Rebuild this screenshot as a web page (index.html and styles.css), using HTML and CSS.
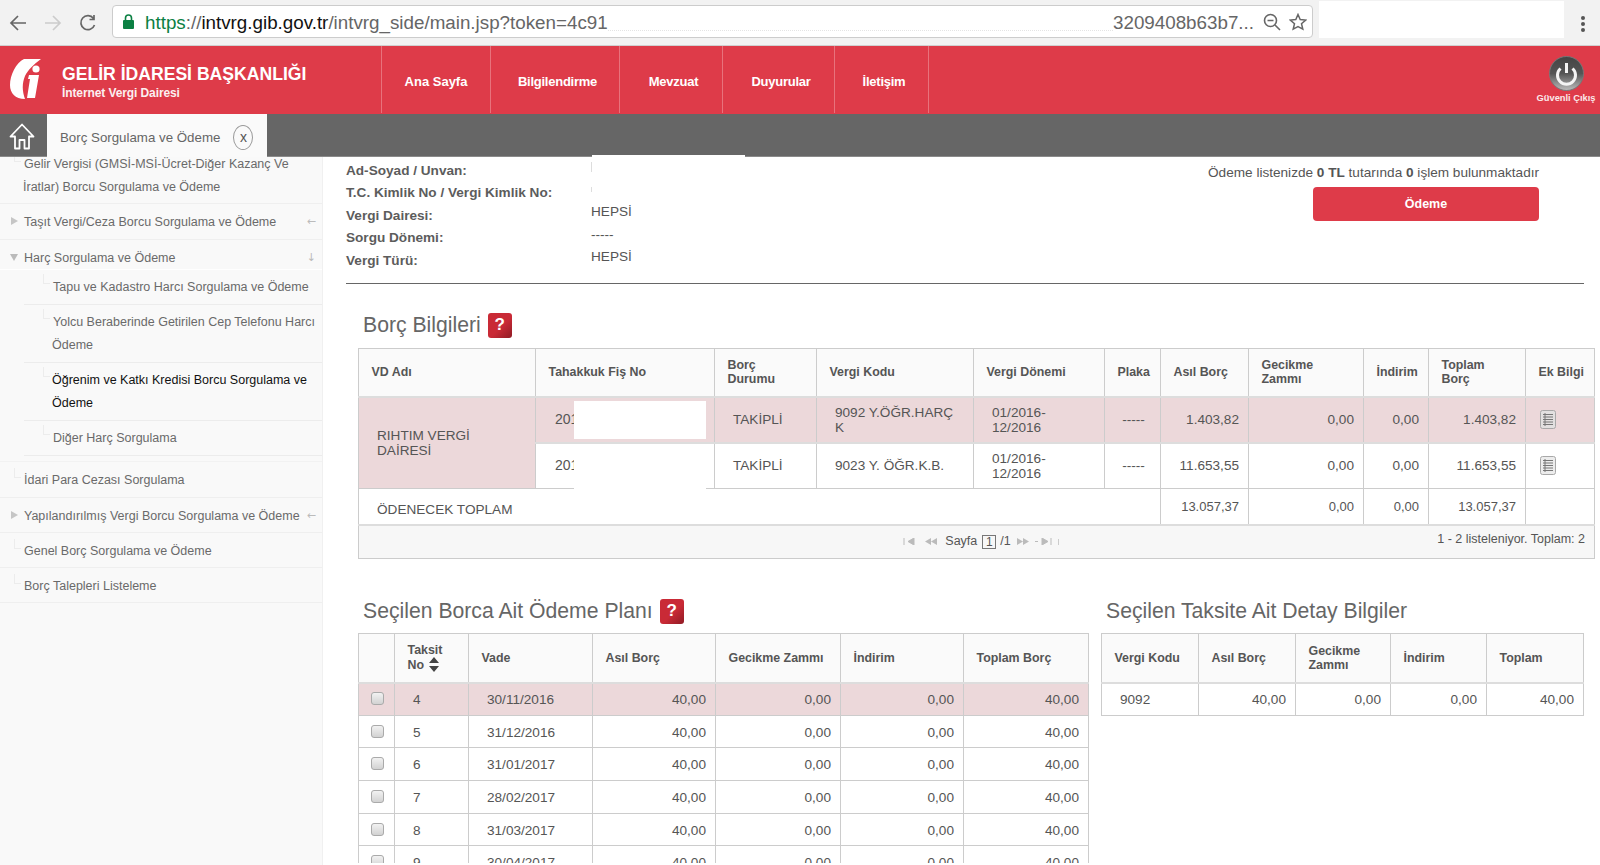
FILE: index.html
```html
<!DOCTYPE html>
<html lang="tr">
<head>
<meta charset="utf-8">
<title>Borç Sorgulama ve Ödeme</title>
<link rel="stylesheet" href="styles.css">
</head>
<body>
<div class="browser">
  <svg class="nav-btn" width="18" height="18" viewBox="0 0 18 18"><path d="M17 9H2M9 2L2 9l7 7" fill="none" stroke="#666" stroke-width="1.7"/></svg>
  <svg class="nav-btn" width="18" height="18" viewBox="0 0 18 18"><path d="M1 9h15M9 2l7 7-7 7" fill="none" stroke="#ccc" stroke-width="1.7"/></svg>
  <svg class="nav-btn" width="18" height="18" viewBox="0 0 18 18"><path d="M15.500 11a7 7 0 1 1-1-6.500M15 1v4.500h-4.500" fill="none" stroke="#666" stroke-width="1.7"/></svg>
  <div class="omnibox">
    <svg class="lock" width="11" height="15" viewBox="0 0 11 15"><rect y="6" width="11" height="9" rx="1" fill="#0b8043"/><path d="M2.500 6V4a3 3 0 0 1 6 0v2" fill="none" stroke="#0b8043" stroke-width="1.600"/></svg>
    <span class="url"><span class="url-https">https</span>://<span class="url-host">intvrg.gib.gov.tr</span>/intvrg_side/main.jsp?token=4c91</span>
    <span class="url-mask"></span>
    <span class="url url-end">3209408b63b7...</span>
    <svg class="omni-icon" width="18" height="18" viewBox="0 0 18 18"><circle cx="7.500" cy="7.500" r="6" fill="none" stroke="#666" stroke-width="1.600"/><path d="M12 12l5 5M4.500 7.500h6" stroke="#666" stroke-width="1.600"/></svg>
    <svg class="omni-icon" width="18" height="18" viewBox="0 0 18 18"><path d="M9 1.500l2.200 5.100 5.500.5-4.200 3.600 1.300 5.400L9 13.700l-4.800 2.400 1.300-5.400L1.300 7.100l5.500-.5z" fill="none" stroke="#666" stroke-width="1.500"/></svg>
  </div>
  <div class="ext-mask"></div>
  <svg class="kebab" width="4" height="18" viewBox="0 0 4 18"><circle cx="2" cy="3" r="2" fill="#555"/><circle cx="2" cy="9" r="2" fill="#555"/><circle cx="2" cy="15" r="2" fill="#555"/></svg>
</div>

<header class="site-header">
  <div class="brand">
    <svg class="logo" width="32" height="41" viewBox="0 0 32 41"><path d="M31 0H14C6 4 0 16 0 26c0 8 5 14 15 14-3-8-3-16 0-23C18 11 23 6 31 0z" fill="#fff"/><path d="M19 16h10l-4 23H17l3-19h-2z" fill="#fff"/><circle cx="26" cy="10" r="3.600" fill="#fff"/></svg>
    <div class="brand-text">
      <div class="brand-title">GELİR İDARESİ BAŞKANLIĞI</div>
      <div class="brand-sub">İnternet Vergi Dairesi</div>
    </div>
  </div>
  <nav class="main-nav">
    <a class="nav-item">Ana Sayfa</a>
    <a class="nav-item">Bilgilendirme</a>
    <a class="nav-item">Mevzuat</a>
    <a class="nav-item">Duyurular</a>
    <a class="nav-item">İletişim</a>
  </nav>
  <div class="logout">
    <svg class="power" width="35" height="35" viewBox="0 0 35 35"><defs><linearGradient id="pw" x1="0" y1="0" x2="0" y2="1"><stop offset="0" stop-color="#444"/><stop offset=".5" stop-color="#555"/><stop offset="1" stop-color="#bdbdbd"/></linearGradient></defs><circle cx="17.500" cy="17.500" r="17" fill="url(#pw)" stroke="#777" stroke-width="1"/><path d="M11.500 12.500a9 9 0 1 0 12 0" fill="none" stroke="#f4f4f4" stroke-width="3"/><path d="M17.500 7v10" stroke="#f4f4f4" stroke-width="3"/></svg>
    <span class="logout-label">Güvenli Çıkış</span>
  </div>
</header>

<div class="tab-bar">
  <div class="home">
    <svg width="26" height="27" viewBox="0 0 26 27"><path d="M1.500 13.500L13 1.500l11.500 12H20V25.500h-4.500V17h-5v8.500H6V13.500z" fill="none" stroke="#fff" stroke-width="1.800" stroke-linejoin="round"/></svg>
  </div>
  <div class="tab">
    <span>Borç Sorgulama ve Ödeme</span>
    <span class="tab-close">x</span>
  </div>
</div>

<div class="layout">
  <aside class="sidebar">
    <ul class="tree">
      <li class="leaf leaf-first">Gelir Vergisi (GMSİ-MSİ-Ücret-Diğer Kazanç Ve<br><span class="wrap-back">İratlar) Borcu Sorgulama ve Ödeme</span></li>
      <li class="branch closed">Taşıt Vergi/Ceza Borcu Sorgulama ve Ödeme<span class="arrow">←</span></li>
      <li class="branch open">Harç Sorgulama ve Ödeme<span class="arrow">↓</span></li>
      <li class="sub">
        <ul class="subtree">
          <li class="sub-leaf">Tapu ve Kadastro Harcı Sorgulama ve Ödeme</li>
          <li class="sub-leaf">Yolcu Beraberinde Getirilen Cep Telefonu Harcı<br><span class="wrap-back">Ödeme</span></li>
          <li class="sub-leaf active">Öğrenim ve Katkı Kredisi Borcu Sorgulama ve<br>Ödeme</li>
          <li class="sub-leaf">Diğer Harç Sorgulama</li>
        </ul>
      </li>
      <li class="leaf leaf-gap">İdari Para Cezası Sorgulama</li>
      <li class="branch closed tight">Yapılandırılmış Vergi Borcu Sorgulama ve Ödeme<span class="arrow">←</span></li>
      <li class="leaf tight">Genel Borç Sorgulama ve Ödeme</li>
      <li class="leaf tight">Borç Talepleri Listeleme</li>
    </ul>
  </aside>

  <main class="content">
    <section class="summary">
      <div class="labels">
        <div>Ad-Soyad / Unvan:</div>
        <div>T.C. Kimlik No / Vergi Kimlik No:</div>
        <div>Vergi Dairesi:</div>
        <div>Sorgu Dönemi:</div>
        <div>Vergi Türü:</div>
      </div>
      <div class="values">
        <span class="value-mask"></span>
        <div><i class="tick"></i></div>
        <div><i class="tick short"></i></div>
        <div>HEPSİ</div>
        <div>-----</div>
        <div>HEPSİ</div>
      </div>
      <div class="pay">
        <p class="pay-text">Ödeme listenizde <b>0 TL</b> tutarında <b>0</b> işlem bulunmaktadır</p>
        <button class="pay-btn">Ödeme</button>
      </div>
    </section>

    <h2 class="title title-first">Borç Bilgileri <span class="help">?</span></h2>
    <table class="grid debt">
      <colgroup><col><col><col><col><col><col><col><col><col><col><col></colgroup>
      <thead>
        <tr><th>VD Adı</th><th>Tahakkuk Fiş No</th><th>Borç<br>Durumu</th><th>Vergi Kodu</th><th>Vergi Dönemi</th><th>Plaka</th><th>Asıl Borç</th><th>Gecikme<br>Zammı</th><th>İndirim</th><th>Toplam<br>Borç</th><th>Ek Bilgi</th></tr>
      </thead>
      <tbody>
        <tr class="sel">
          <td rowspan="2" class="txt vd">RIHTIM VERGİ DAİRESİ</td>
          <td class="txt fis">201<span class="fis-mask"></span></td>
          <td class="txt">TAKİPLİ</td>
          <td class="txt">9092 Y.ÖĞR.HARÇ<br>K</td>
          <td class="txt">01/2016-<br>12/2016</td>
          <td class="mid">-----</td>
          <td class="num">1.403,82</td><td class="num">0,00</td><td class="num">0,00</td><td class="num">1.403,82</td>
          <td class="doc"><svg width="16" height="19" viewBox="0 0 16 19"><rect x=".5" y=".5" width="15" height="18" rx="2" fill="#e2e0e0" stroke="#a8a8a8"/><path d="M3 4.500h10M3 7h10M3 9.500h10M3 12h10M3 14.500h10M5 3v13" fill="none" stroke="#777"/></svg></td>
        </tr>
        <tr class="row2">
          <td class="txt fis">201<span class="fis-mask tall"></span></td>
          <td class="txt">TAKİPLİ</td>
          <td class="txt">9023 Y. ÖĞR.K.B.</td>
          <td class="txt">01/2016-<br>12/2016</td>
          <td class="mid">-----</td>
          <td class="num">11.653,55</td><td class="num">0,00</td><td class="num">0,00</td><td class="num">11.653,55</td>
          <td class="doc"><svg width="16" height="19" viewBox="0 0 16 19"><rect x=".5" y=".5" width="15" height="18" rx="2" fill="#ececec" stroke="#a8a8a8"/><path d="M3 4.500h10M3 7h10M3 9.500h10M3 12h10M3 14.500h10M5 3v13" fill="none" stroke="#777"/></svg></td>
        </tr>
        <tr class="total">
          <td colspan="6" class="txt total-label">ÖDENECEK TOPLAM</td>
          <td class="num">13.057,37</td><td class="num">0,00</td><td class="num">0,00</td><td class="num">13.057,37</td><td></td>
        </tr>
      </tbody>
      <tfoot>
        <tr><td colspan="11" class="pager-cell">
          <div class="pager">
            <div class="pager-center">
              <svg class="pg-first" width="13" height="7" viewBox="0 0 13 7"><path d="M1 0v7M11 0v7L5 3.500z" fill="#bbb" stroke="#bbb"/></svg>
              <svg class="pg-prev" width="14" height="7" viewBox="0 0 14 7"><path d="M7 0v7L1 3.500zM13 0v7L7 3.500z" fill="#bbb"/></svg>
              <span class="pager-text">Sayfa</span><span class="page-box">1</span><span class="pager-text">/1</span>
              <svg width="14" height="7" viewBox="0 0 14 7"><path d="M1 0v7l6-3.500zM7 0v7l6-3.500z" fill="#bbb"/></svg>
              <i class="pager-dot"></i>
              <svg width="13" height="7" viewBox="0 0 13 7"><path d="M2 0v7l6-3.500zM11 0v7" fill="#bbb" stroke="#bbb"/></svg>
              <i class="pager-bar"></i>
            </div>
            <span class="pager-right">1 - 2 listeleniyor. Toplam: 2</span>
          </div>
        </td></tr>
      </tfoot>
    </table>

    <div class="lower">
      <section class="plan">
        <h2 class="title">Seçilen Borca Ait Ödeme Planı <span class="help">?</span></h2>
        <table class="grid plan-t">
          <colgroup><col><col><col><col><col><col><col></colgroup>
          <thead>
            <tr><th></th><th class="sortable">Taksit<br>No <svg width="12" height="15" viewBox="0 0 12 15"><path d="M6 0l5 6H1zM6 15l5-6H1z" fill="#444"/></svg></th><th>Vade</th><th>Asıl Borç</th><th>Gecikme Zammı</th><th>İndirim</th><th>Toplam Borç</th></tr>
          </thead>
          <tbody>
            <tr class="sel"><td class="chk"><input type="checkbox"></td><td class="txt no">4</td><td class="txt">30/11/2016</td><td class="num">40,00</td><td class="num">0,00</td><td class="num">0,00</td><td class="num">40,00</td></tr>
            <tr><td class="chk"><input type="checkbox"></td><td class="txt no">5</td><td class="txt">31/12/2016</td><td class="num">40,00</td><td class="num">0,00</td><td class="num">0,00</td><td class="num">40,00</td></tr>
            <tr><td class="chk"><input type="checkbox"></td><td class="txt no">6</td><td class="txt">31/01/2017</td><td class="num">40,00</td><td class="num">0,00</td><td class="num">0,00</td><td class="num">40,00</td></tr>
            <tr><td class="chk"><input type="checkbox"></td><td class="txt no">7</td><td class="txt">28/02/2017</td><td class="num">40,00</td><td class="num">0,00</td><td class="num">0,00</td><td class="num">40,00</td></tr>
            <tr><td class="chk"><input type="checkbox"></td><td class="txt no">8</td><td class="txt">31/03/2017</td><td class="num">40,00</td><td class="num">0,00</td><td class="num">0,00</td><td class="num">40,00</td></tr>
            <tr><td class="chk"><input type="checkbox"></td><td class="txt no">9</td><td class="txt">30/04/2017</td><td class="num">40,00</td><td class="num">0,00</td><td class="num">0,00</td><td class="num">40,00</td></tr>
          </tbody>
        </table>
      </section>
      <section class="detail">
        <h2 class="title">Seçilen Taksite Ait Detay Bilgiler</h2>
        <table class="grid detail-t">
          <colgroup><col><col><col><col><col></colgroup>
          <thead>
            <tr><th>Vergi Kodu</th><th>Asıl Borç</th><th>Gecikme<br>Zammı</th><th>İndirim</th><th>Toplam</th></tr>
          </thead>
          <tbody>
            <tr><td class="txt">9092</td><td class="num">40,00</td><td class="num">0,00</td><td class="num">0,00</td><td class="num">40,00</td></tr>
          </tbody>
        </table>
      </section>
    </div>
  </main>
</div>
<div class="bottom-edge"></div>
</body>
</html>
```
FILE: styles.css
```css
* { box-sizing: border-box; }
html, body { margin: 0; height: 865px; overflow: hidden; }
body { position: relative; background: #fff; font-family: "Liberation Sans", Arial, sans-serif; color: #555; }
ul { list-style: none; margin: 0; padding: 0; }

/* browser chrome */
.browser { height: 46px; background: #f2f2f2; border-bottom: 1px solid #d0d0d0; display: flex; align-items: flex-start; padding: 1px 0 0 9px; }
.nav-btn { margin: 13px 17px 0 0; flex: none; }
.nav-btn:nth-child(3) { margin-right: 15px; }
.omnibox { width: 1201px; height: 33px; margin-top: 4px; background: #fff; border: 1px solid #ccc; border-radius: 4px; display: flex; align-items: center; padding: 0 5px 0 10px; }
.lock { flex: none; margin-right: 11px; }
.url { font-size: 18.800px; color: #666; white-space: nowrap; flex: none; padding-top: 3px; }
.url-https { color: #0b8043; }
.url-host { color: #111; }
.url-mask { flex: 1; height: 7px; margin-top: 12px; border-bottom: 1px dotted #e4e4e4; }
.url-end { margin-right: 9px; }
.omni-icon { flex: none; margin-right: 8px; }
.omni-icon:last-child { margin-right: 0; }
.ext-mask { width: 245px; height: 37px; background: #fff; margin-left: 6px; flex: none; margin-top: 0; }
.kebab { margin: 14px 0 0 17px; flex: none; }

/* red header */
.site-header { height: 68px; background: #de3b49; display: flex; color: #fff; }
.brand { width: 381px; display: flex; padding: 13px 0 0 10px; flex: none; }
.logo { flex: none; }
.brand-text { margin-left: 20px; padding-top: 4px; }
.brand-title { font-size: 17.600px; font-weight: 700; line-height: 22px; white-space: nowrap; }
.brand-sub { font-size: 12px; font-weight: 700; line-height: 16px; opacity: .92; letter-spacing: -.1px; }
.main-nav { display: grid; grid-template-columns: 109px 129px 103px 112px 94px; height: 67px; border-left: 1px solid #e8727c; }
.nav-item { display: flex; align-items: center; justify-content: center; font-size: 13px; font-weight: 700; letter-spacing: -.25px; border-right: 1px solid #e8727c; padding: 4px 0 0 5px; white-space: nowrap; }
.nav-item:first-child { padding-left: 0; letter-spacing: 0; }
.logout { margin-left: auto; width: 66px; display: flex; flex-direction: column; align-items: center; padding: 10px 2px 0 0; }
.power { flex: none; display: block; }
.logout-label { font-size: 9.300px; font-weight: 700; margin-top: 2px; white-space: nowrap; color: #fbe9ea; }

/* tabs */
.tab-bar { height: 43px; background: #666; border-bottom: 1px solid #8a8a8a; display: flex; position: relative; z-index: 1; }
.home { width: 47px; padding: 9px 0 0 9px; flex: none; }
.home svg { display: block; }
.tab { width: 220px; height: 43px; background: #fafafa; display: flex; align-items: center; font-size: 13.300px; color: #666; padding: 3px 0 0 13px; }
.tab-close { width: 20px; height: 25px; margin-left: 13px; border: 1px solid #999; border-radius: 50%; display: flex; align-items: center; justify-content: center; color: #555; font-size: 14px; }

/* layout */
.layout { display: flex; height: 708px; }
.sidebar { width: 323px; flex: none; background: #f9f9f9; border-right: 1px solid #f0f0f0; overflow: hidden; font-size: 12.500px; line-height: 23px; color: #6a6a6a; }
.tree { margin-top: -5px; }
.tree > li { position: relative; padding: 7px 8px 5px 24px; border-bottom: 1px solid #efefef; white-space: nowrap; }
.tree > li.tight { padding-bottom: 4px; }
.leaf-first { padding-top: 1px !important; padding-bottom: 4px !important; }
.leaf-gap { margin-top: 5px; border-top: 1px solid #f2f2f2; }
.wrap-back { margin-left: -1px; }
.tree > li.open { padding-bottom: 0; height: 30px; border-bottom: 1px solid #fff; }
.tree > li.sub { padding: 0 0 0 24px; border-bottom: 0; }
.sub-leaf { position: relative; padding: 6px 4px 5px 29px; border-bottom: 1px solid #ececec; }
.sub-leaf.active { color: #111; padding-left: 28px; }
.leaf::before, .sub-leaf::before { content: ""; position: absolute; width: 6px; height: 9px; border-left: 1px solid #ececec; border-bottom: 1px solid #ececec; left: 14px; top: 6px; }
.leaf-first::before { top: 0; }
.sub-leaf::before { left: 19px; top: 4px; }
.branch::before { content: ""; position: absolute; left: 11px; top: 13px; border-style: solid; border-width: 4.500px 0 4.500px 7px; border-color: transparent transparent transparent #c6c6c6; }
.branch.open::before { top: 14px; left: 10px; border-width: 7px 4.500px 0 4.500px; border-color: #bbb transparent transparent transparent; }
.arrow { position: absolute; right: 6px; top: 6px; font-size: 11px; color: #bbb; font-family: "DejaVu Sans", sans-serif; }

/* main */
.content { flex: 1; min-width: 0; padding-left: 23px; }
.summary { width: 1238px; height: 127px; border-bottom: 1px solid #666; display: flex; }
.labels { width: 245px; flex: none; padding-top: 2.500px; font-size: 13.600px; font-weight: 700; color: #5c5c5c; }
.labels div { height: 22.500px; line-height: 22.500px; white-space: nowrap; }
.values { position: relative; width: 594px; flex: none; margin-top: -2px; padding-top: 1px; font-size: 13.600px; }
.values div { height: 22.500px; line-height: 22.500px; }
.value-mask { position: absolute; left: 1px; top: 0; width: 153px; height: 2px; background: #fff; z-index: 2; }
.tick { display: block; width: 1px; height: 10px; background: #ddd; position: relative; top: 6px; }
.tick.short { height: 5px; top: 8px; }
.pay { flex: 1; display: flex; flex-direction: column; align-items: flex-end; padding: 6px 45px 0 0; }
.pay-text { margin: 0; font-size: 13.600px; line-height: 20px; white-space: nowrap; }
.pay-btn { width: 226px; height: 34px; margin-top: 4px; padding-bottom: 2px; background: #de3b49; border: 0; border-radius: 4px; color: #fff; font: 700 12.500px "Liberation Sans", Arial, sans-serif; }

.title { margin: 0 0 8px; padding-left: 17px; font-size: 21.200px; font-weight: 400; line-height: 30px; height: 30px; color: #666; white-space: nowrap; display: flex; gap: 7px; align-items: center; }
.title-first { margin-top: 26px; }
.help { width: 24px; height: 25px; border-radius: 3px; background: linear-gradient(135deg, #c92a36 55%, #8f1b24); color: #fff; font-size: 17px; font-weight: 700; display: inline-flex; align-items: center; justify-content: center; flex: none; }

/* tables */
.grid { border-collapse: collapse; table-layout: fixed; }
.grid th, .grid td { border: 1px solid #ccc; padding: 0; color: #555; }
.grid th { background: #fafafa; font-size: 12.400px; font-weight: 700; line-height: 14px; text-align: left; padding: 0 4px 0 12.500px; vertical-align: middle; border-bottom: 2px solid #ddd; }
.grid td { font-size: 13.600px; line-height: 15px; }
.txt { padding-left: 18px !important; padding-right: 4px !important; }
.num { text-align: right; padding-right: 9px !important; }
.mid { text-align: center; padding-left: 2px !important; }
.doc { padding-left: 14px !important; }
.doc svg { display: block; }
.sel td { background: #ecd8da; border-bottom: 2px solid #ddd; }
.row2 td { background: #fff; }

.debt { width: 1236px; margin-left: 12px; }
.debt col:nth-child(1) { width: 177px; }
.debt col:nth-child(2) { width: 179px; }
.debt col:nth-child(3) { width: 102px; }
.debt col:nth-child(4) { width: 157px; }
.debt col:nth-child(5) { width: 131px; }
.debt col:nth-child(6) { width: 56px; }
.debt col:nth-child(7) { width: 88px; }
.debt col:nth-child(8) { width: 115px; }
.debt col:nth-child(9) { width: 65px; }
.debt col:nth-child(10) { width: 97px; }
.debt col:nth-child(11) { width: 69px; }
.debt thead tr { height: 48px; }
.debt .sel { height: 46px; }
.debt .row2 { height: 46px; }
.debt .total { height: 36px; }
.debt .total td { border-bottom: 2px solid #ddd; font-size: 13px; }
.debt .total .total-label { font-size: 13.600px; padding-top: 6px; }
.grid td.fis { position: relative; overflow: visible; padding-left: 19px !important; font-size: 14px; }
.fis-mask { position: absolute; left: 38px; top: 3px; width: 132px; height: 38px; background: #fff; }
.fis-mask.tall { top: 0; height: 46px; }
.debt .sel .vd { background: #ecd8da; border-bottom: 1px solid #ccc; width: 100%; padding-right: 30px !important; padding-top: 1px; }
.pager-cell { background: #f7f7f7; height: 34px; }
.grid td.pager-cell { border-color: #ccc; border-top: 0; }
.pager { display: flex; height: 32px; position: relative; justify-content: center; align-items: center; font-size: 12px; padding-left: 9px; }
.pager-center { display: flex; align-items: center; gap: 5px; }
.pg-first { margin-right: 3px; }
.pg-prev { margin-right: 2px; }
.pager-text { font-size: 12.500px; }
.page-box { width: 14px; height: 14px; border: 1px solid #777; text-align: center; line-height: 12px; margin-right: -1px; font-size: 12px; }
.pager-dot { width: 3px; height: 1px; background: #bbb; margin-right: -3px; }
.pager-bar { width: 1px; height: 6px; background: #ccc; }
.pager-right { position: absolute; right: 9px; top: 3px; font-size: 12.500px; line-height: 20px; }

.lower { display: flex; gap: 12px; margin: 37px 0 0 12px; }
.plan, .detail { flex: none; }
.plan .title, .detail .title { padding-left: 5px; margin-bottom: 7px; }
.plan-t { width: 730px; }
.plan-t col:nth-child(1) { width: 36px; }
.plan-t col:nth-child(2) { width: 74px; }
.plan-t col:nth-child(3) { width: 124px; }
.plan-t col:nth-child(4) { width: 123px; }
.plan-t col:nth-child(5) { width: 125px; }
.plan-t col:nth-child(6) { width: 123px; }
.plan-t col:nth-child(7) { width: 125px; }
.plan-t thead tr { height: 49px; }
.plan-t tbody tr { height: 32.700px; }
.plan-t tbody td { padding-top: 1px; }
.plan-t .sel td { border-bottom: 1px solid #ccc; }
.sortable svg { vertical-align: -3px; margin-left: 1px; }
.no { padding-left: 18px !important; }
.chk { padding-left: 12px !important; }
.chk input { appearance: none; display: block; width: 13px; height: 13px; margin: -2px 0 0; border: 1px solid #aaa; border-radius: 3px; background: linear-gradient(#f2f2f2, #d2d2d2); }
.detail-t { width: 482px; }
.detail-t col:nth-child(1) { width: 97px; }
.detail-t col:nth-child(2) { width: 97px; }
.detail-t col:nth-child(3) { width: 95px; }
.detail-t col:nth-child(4) { width: 96px; }
.detail-t col:nth-child(5) { width: 97px; }
.detail-t thead tr { height: 49px; }
.detail-t tbody tr { height: 33px; }
.detail-t td { border-color: #ccc; }

.bottom-edge { position: absolute; left: 346px; right: 0; bottom: 0; height: 2px; background: #fff; }
```
